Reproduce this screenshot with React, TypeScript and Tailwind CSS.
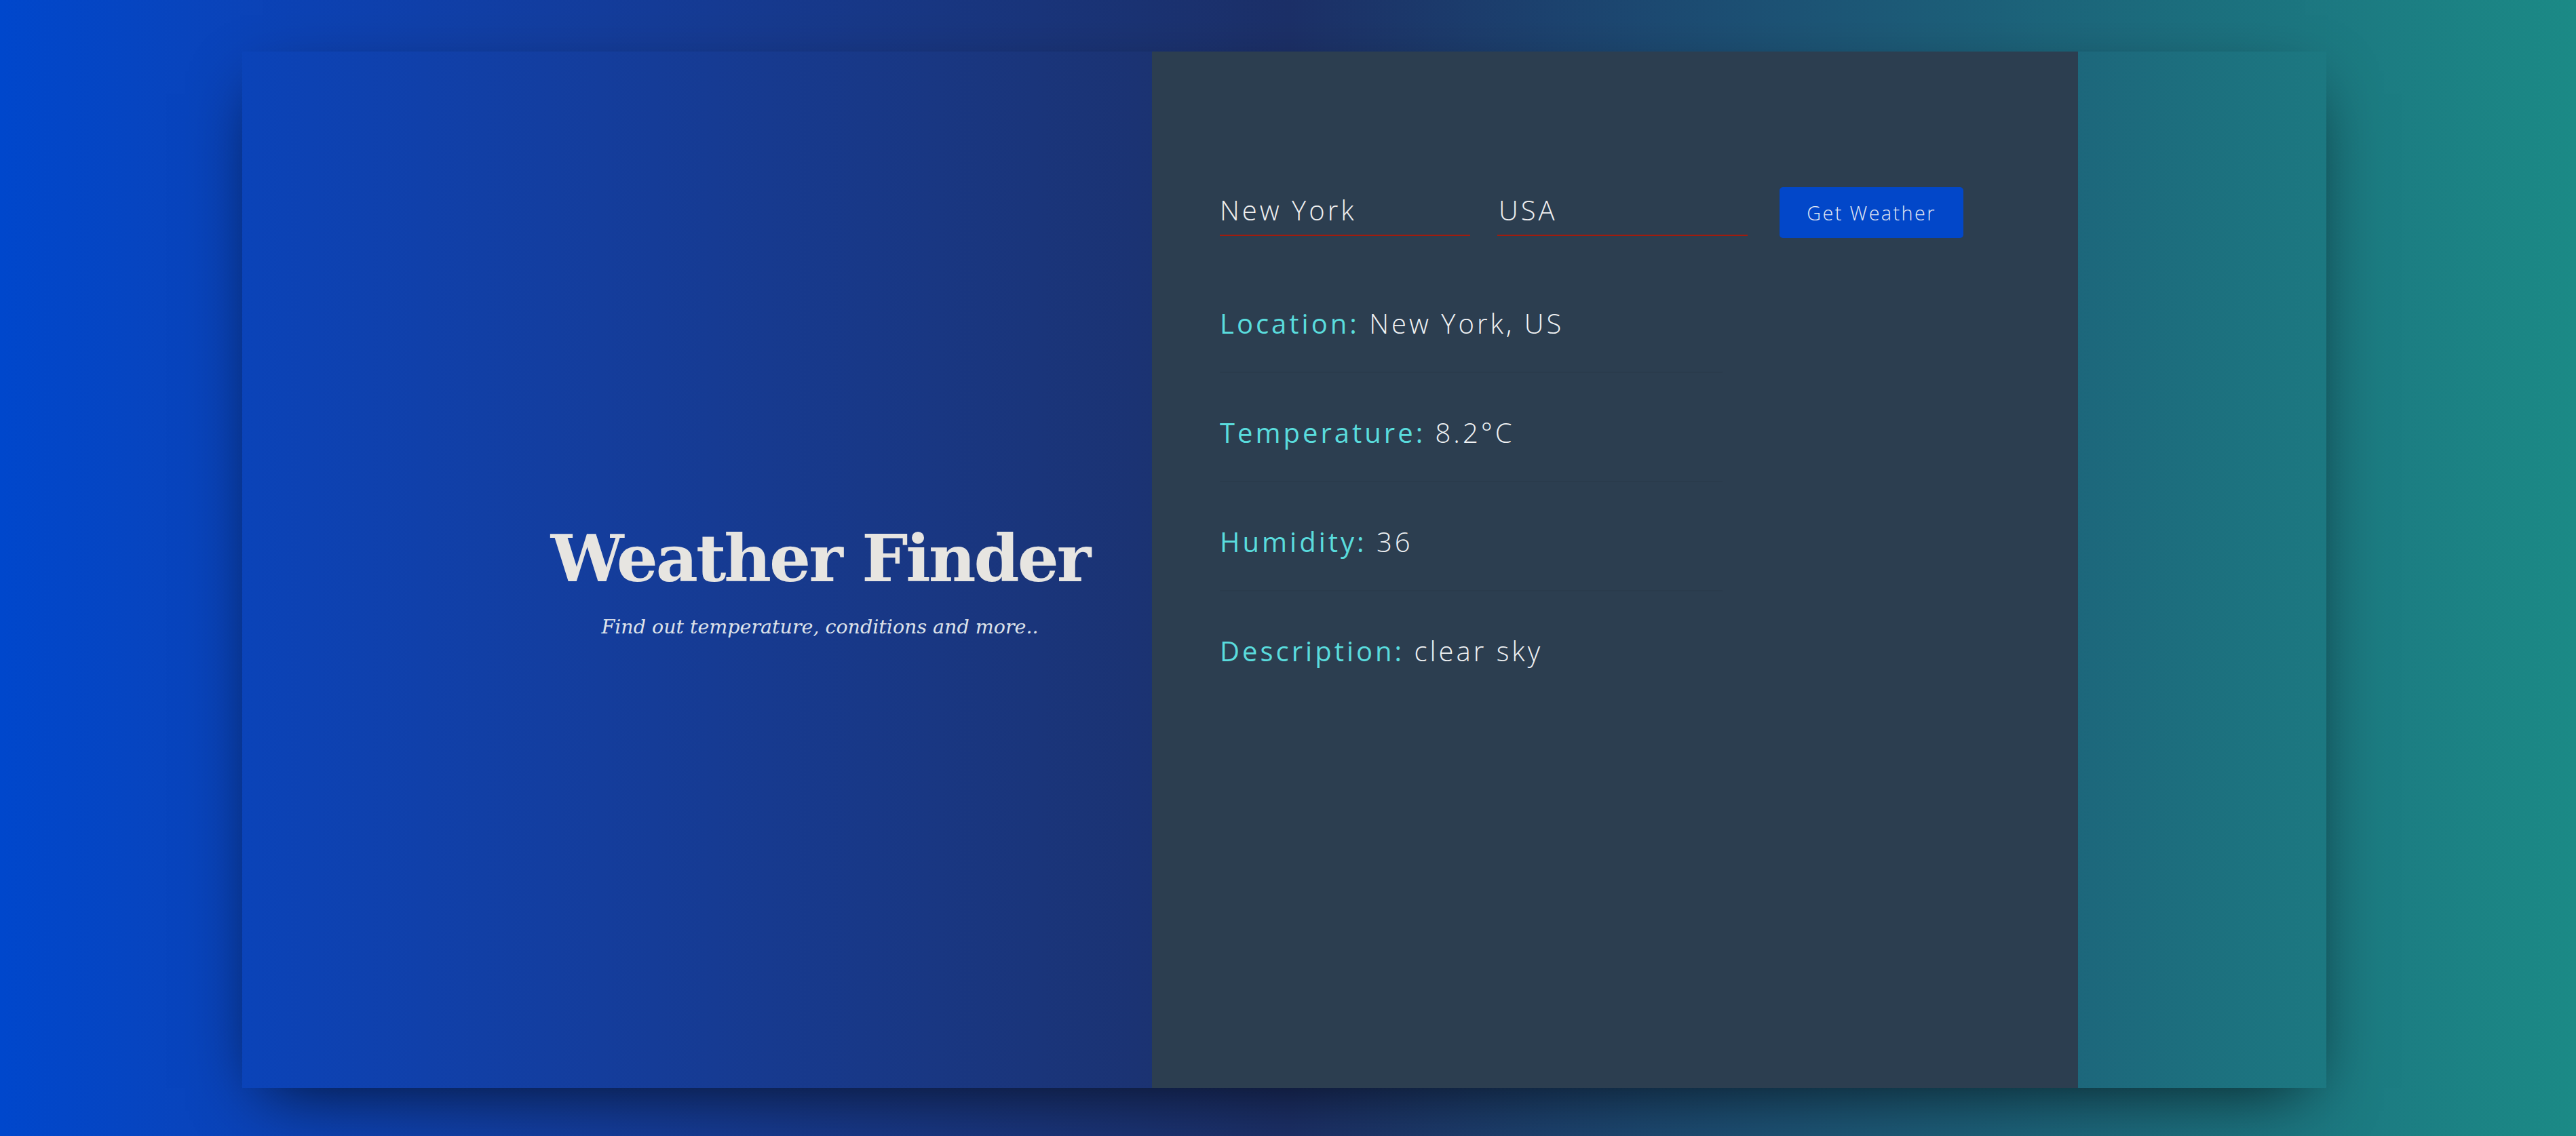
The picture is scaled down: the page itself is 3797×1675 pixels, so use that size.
import React from 'react';

interface InfoRow {
    label: string,
    value: string,
}

const rows: InfoRow[] = [
    {label: 'Location:', value: 'New York, US'},
    {label: 'Temperature:', value: '8.2°C'},
    {label: 'Humidity:', value: '36'},
    {label: 'Description:', value: 'clear sky'},
]

const Titles: React.FC = () => {
    return (
        <div className="flex flex-col items-center w-[1341px] h-full pl-[362px] pt-[690px]">
            <h1 className="font-['DejaVu_Serif',serif] font-bold text-[96px] leading-[1.2] text-[#e7e5e1] tracking-[-3px] whitespace-nowrap">
                Weather Finder
            </h1>
            <p className="mt-[27px] font-['DejaVu_Serif',serif] italic text-[28.5px] leading-[1.2] text-[#dde2ea] whitespace-nowrap">
                Find out temperature, conditions and more..
            </p>
        </div>
    );
};

const Form: React.FC = () => {
    return (
        <form className="flex items-start" onSubmit={(e) => e.preventDefault()}>
            <input
                type="text"
                name="city"
                defaultValue="New York"
                className="mt-[6px] mr-[40px] w-[369px] h-[66px] pb-[9px] bg-transparent border-0 border-b-2 border-[#a31b0c] outline-none text-[40px] font-light tracking-[4px] text-[#f0f0f0]"
            />
            <input
                type="text"
                name="country"
                defaultValue="USA"
                className="mt-[6px] mr-[47px] w-[369px] h-[66px] pb-[9px] pl-[2px] bg-transparent border-0 border-b-2 border-[#a31b0c] outline-none text-[40px] font-light tracking-[4px] text-[#f0f0f0]"
            />
            <button className="w-[271px] h-[75px] rounded-[5px] bg-[#0247c9] text-[28.8px] font-light tracking-[2.4px] text-[#e4e8f4]">
                Get Weather
            </button>
        </form>
    );
};

const Weather: React.FC = () => {
    return (
        <div className="mt-[38px] w-[741px]">
            {rows.map((row, i) => (
                <p
                    key={row.label}
                    className={`pt-[61px] pb-[44px] text-[40px] leading-[54px] tracking-[4px] whitespace-nowrap ${i < rows.length - 1 ? 'border-b-2 border-black/[0.04]' : ''}`}
                >
                    <span className="text-[#5adcdd] font-normal">{row.label}</span>{' '}
                    <span className="text-[#f0f2f4] font-light">{row.value}</span>
                </p>
            ))}
        </div>
    );
};

const App: React.FC = () => {
    return (
        <div className="w-full h-screen overflow-hidden bg-linear-to-r from-[#0047cc] via-[#1c3068] to-[#1b8a86] font-['Open_Sans',sans-serif]">
            <div className="flex ml-[357px] pt-[76px]">
                <div className="flex w-[3072px] h-[1528px] shadow-[0_31px_96px_-31px_rgba(0,0,0,0.75)]">
                    <Titles/>
                    <div className="w-[1365px] h-full bg-[#2c3e50] pl-[100px] pt-[200px]">
                        <Form/>
                        <Weather/>
                    </div>
                    <div className="flex-1"/>
                </div>
            </div>
        </div>
    );
};

export default App;
